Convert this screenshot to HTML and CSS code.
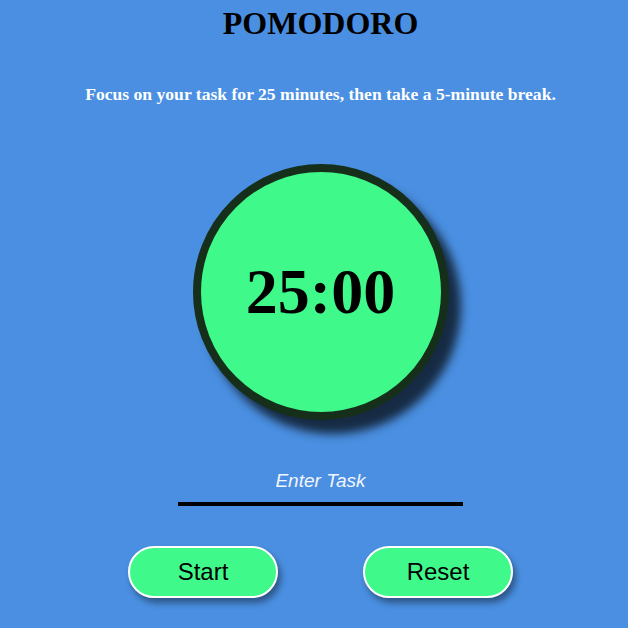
FILE: index.html
```html
<!DOCTYPE html>
<html>
<head>
<meta charset="utf-8">
<link rel="stylesheet" href="styles.css">
</head>
<body>
<main class="app">
  <h1 class="title">POMODORO</h1>
  <p class="subtitle">Focus on your task for 25 minutes, then take a 5-minute break.</p>
  <div class="timer"><span class="time">25:00</span></div>
  <input class="task" type="text" placeholder="Enter Task">
  <div class="buttons">
    <button class="btn">Start</button>
    <button class="btn">Reset</button>
  </div>
</main>
</body>
</html>
```
FILE: styles.css
```css
html, body {
  margin: 0;
  padding: 0;
  background: #4a8fe1;
  height: 100%;
  overflow: hidden;
}
.app {
  display: flex;
  flex-direction: column;
  align-items: center;
  padding: 5px 0 0 13px;
  font-family: "Liberation Serif", serif;
}
.title {
  margin: 0;
  font-size: 32px;
  font-weight: bold;
  color: #000;
  line-height: 37px;
}
.subtitle {
  margin: 43px 0 0;
  font-size: 17.6px;
  font-weight: bold;
  color: #fff;
  line-height: 18px;
}
.timer {
  margin-top: 61px;
  width: 240px;
  height: 240px;
  border: 8px solid #152f1b;
  border-radius: 50%;
  background: #3ffa8b;
  display: flex;
  align-items: center;
  justify-content: center;
  box-shadow: 12px 14px 10px rgba(0, 0, 0, 0.7);
}
.time {
  font-size: 64px;
  font-weight: bold;
  color: #000;
}
.task {
  margin-top: 46px;
  width: 285px;
  box-sizing: border-box;
  background: transparent;
  border: none;
  border-bottom: 4px solid #000;
  outline: none;
  text-align: center;
  font-family: "Liberation Sans", sans-serif;
  font-style: italic;
  font-size: 19px;
  padding: 4px 0 10px;
  color: #fff;
}
.task::placeholder {
  color: #f2f6fd;
  opacity: 1;
}
.buttons {
  margin-top: 40px;
  display: flex;
  gap: 85px;
}
.btn {
  width: 150px;
  height: 52px;
  box-sizing: border-box;
  border: 2px solid #fff;
  border-radius: 26px;
  background: #3ffa8b;
  color: #000;
  font-family: "Liberation Sans", sans-serif;
  font-size: 24px;
  box-shadow: 3px 5px 6px rgba(0, 0, 0, 0.4);
}
```
